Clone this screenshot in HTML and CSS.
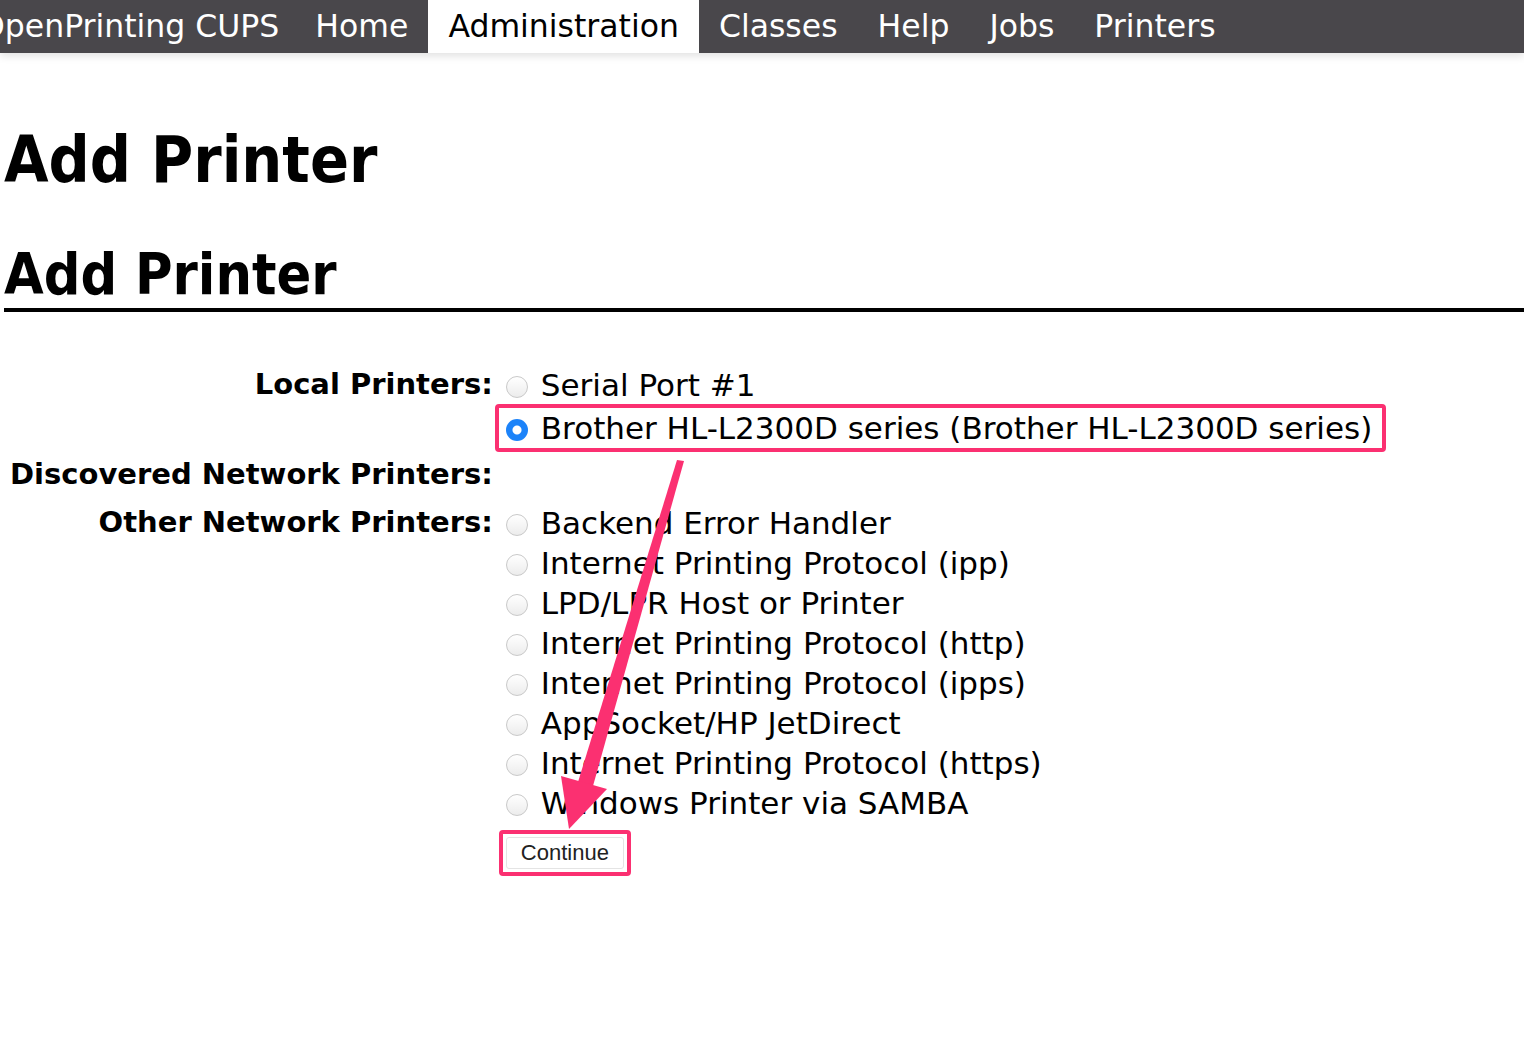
FILE: index.html
```html
<!DOCTYPE html>
<html lang="en">
<head>
    <meta charset="UTF-8">
    <title>Add Printer - CUPS</title>
    <link rel="stylesheet" href="styles.css">
</head>
<body>
<div class="header">
    <ul class="nav">
        <li class="brand">OpenPrinting CUPS</li>
        <li>Home</li>
        <li class="active">Administration</li>
        <li>Classes</li>
        <li>Help</li>
        <li>Jobs</li>
        <li>Printers</li>
    </ul>
</div>

<div class="body">
    <h1 class="title">Add Printer</h1>
    <h2 class="subtitle">Add Printer</h2>

    <form class="add-form">
        <table class="choices">
            <tr>
                <th>Local Printers:</th>
                <td>
                    <label class="choice"><input type="radio" name="device"> Serial Port #1</label>
                    <div class="mark"><label class="choice"><input type="radio" name="device" checked> Brother HL-L2300D series (Brother HL-L2300D series)</label></div>
                </td>
            </tr>
            <tr>
                <th>Discovered Network Printers:</th>
                <td></td>
            </tr>
            <tr>
                <th>Other Network Printers:</th>
                <td>
                    <label class="choice"><input type="radio" name="device"> Backend Error Handler</label>
                    <label class="choice"><input type="radio" name="device"> Internet Printing Protocol (ipp)</label>
                    <label class="choice"><input type="radio" name="device"> LPD/LPR Host or Printer</label>
                    <label class="choice"><input type="radio" name="device"> Internet Printing Protocol (http)</label>
                    <label class="choice"><input type="radio" name="device"> Internet Printing Protocol (ipps)</label>
                    <label class="choice"><input type="radio" name="device"> AppSocket/HP JetDirect</label>
                    <label class="choice"><input type="radio" name="device"> Internet Printing Protocol (https)</label>
                    <label class="choice"><input type="radio" name="device"> Windows Printer via SAMBA</label>
                </td>
            </tr>
            <tr>
                <th></th>
                <td><div class="mark mark-button"><button type="button" class="continue">Continue</button></div></td>
            </tr>
        </table>
    </form>
</div>

<svg class="arrow" width="1524" height="1064" viewBox="0 0 1524 1064">
    <polygon points="677,460 684,461 593,786 578,782" fill="#fb3071"/>
    <polygon points="561,776 607,789 569,829" fill="#fb3071"/>
</svg>
</body>
</html>
```

FILE: styles.css
```css
html,body
{
    margin:0;
    padding:0;
}
body
{
    background-color:white;
    color:black;
    font-family:"DejaVu Sans", sans-serif;
    overflow:hidden;
}
.header
{
    background-color:#49474b;
    height:53px;
    box-shadow:0 3px 8px rgba(0,0,0,0.12);
}
.nav
{
    list-style:none;
    margin:0 0 0 -40px;
    padding:0;
    display:flex;
    height:53px;
}
.nav li
{
    color:white;
    font-size:31.5px;
    line-height:53px;
    padding:0 20px;
    white-space:nowrap;
}
.nav .brand
{
    padding-right:16px;
}
.nav .active
{
    background-color:white;
    color:black;
}
.body
{
    padding:0 0 0 4px;
}
.title
{
    font-size:64px;
    font-stretch:condensed;
    margin:67px 0 0 0;
    line-height:80px;
}
.subtitle
{
    font-size:57px;
    font-stretch:condensed;
    margin:40px 0 0 0;
    line-height:68px;
    border-bottom:4px solid black;
    padding-bottom:0;
}
.add-form
{
    margin-top:44px;
}
.choices
{
    border-collapse:separate;
    border-spacing:0 8px;
}
.choices th
{
    text-align:right;
    vertical-align:top;
    font-size:29px;
    line-height:40px;
    padding:0 12px 0 6px;
    white-space:nowrap;
}
.choices td
{
    vertical-align:top;
    font-size:31px;
    line-height:40px;
}
.choice
{
    display:flex;
    align-items:center;
    gap:13px;
    white-space:nowrap;
}
.choice input
{
    appearance:none;
    margin:4px 0 0 0;
    width:22px;
    height:22px;
    border-radius:50%;
    border:1px solid #c9c9c9;
    background:linear-gradient(#ffffff, #ececec);
    flex:none;
}
.choice input:checked
{
    border:none;
    background:radial-gradient(circle, white 0 4px, #1c83f9 5px);
}
.mark
{
    display:flex;
    width:max-content;
    border:4px solid #fb3071;
    border-radius:4px;
    margin:-1px 0 -7px -11px;
    padding:0 10px 0 7px;
}
.mark-button
{
    margin:-3px 0 0 -7px;
    padding:3px;
}
.continue
{
    font-family:"Liberation Sans", sans-serif;
    font-size:22px;
    color:#222;
    background:white;
    border:1px solid #e4e4e4;
    border-radius:3px;
    padding:1px 14px;
    height:32px;
}
.arrow
{
    position:absolute;
    top:0;
    left:0;
    pointer-events:none;
}
```
